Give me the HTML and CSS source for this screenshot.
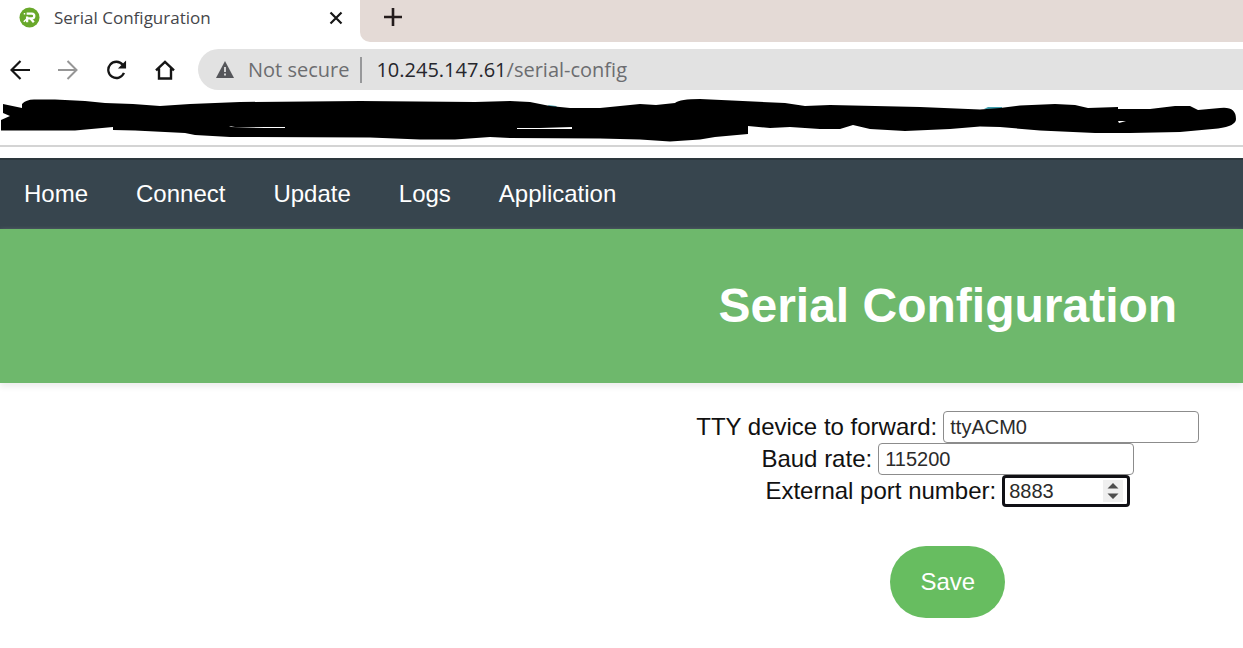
FILE: index.html
```html
<!DOCTYPE html>
<html lang="en">
<head>
<meta charset="utf-8">
<title>Serial Configuration</title>
<link rel="stylesheet" href="styles.css">
</head>
<body>
<header class="browser">
  <div class="tabs">
    <div class="tab">
      <svg class="favicon" viewBox="0 0 22 22" aria-hidden="true">
        <circle cx="11" cy="11" r="10.5" fill="#69a82b"/>
        <path d="M8 7h5.500a2.200 2.200 0 0 1 0 5H8.500M8.500 10v6M12 12l3.500 4" fill="none" stroke="#fff" stroke-width="2.400"/>
        <path d="M5 7h1.500M5 15.500l3-3" stroke="#fff" stroke-width="1.500"/>
      </svg>
      <span class="tab-title">Serial Configuration</span>
      <button class="icon-button tab-close" aria-label="Close tab">
        <svg width="14" height="14" viewBox="0 0 14 14"><path d="M1.500 1.500l11 11M12.500 1.500l-11 11" stroke="#161616" stroke-width="2.200"/></svg>
      </button>
    </div>
    <div class="strip">
      <button class="icon-button" aria-label="New tab">
        <svg width="18" height="18" viewBox="0 0 18 18"><path d="M9 0v18M0 9h18" stroke="#241c1c" stroke-width="2.600"/></svg>
      </button>
    </div>
  </div>
  <div class="toolbar">
    <div class="tools">
      <button class="icon-button" aria-label="Back">
        <svg width="20" height="20" viewBox="0 0 20 20" fill="none" stroke="#151515" stroke-width="2.200"><path d="M20 10H2M10.500 1L1.500 10l9 9"/></svg>
      </button>
      <button class="icon-button" aria-label="Forward">
        <svg width="20" height="20" viewBox="0 0 20 20" fill="none" stroke="#969696" stroke-width="2"><path d="M0 10h18M9.500 1l9 9-9 9"/></svg>
      </button>
      <button class="icon-button" aria-label="Reload">
        <svg width="21" height="20" viewBox="0 0 22 20"><path d="M17.500 4.500A8.500 8.500 0 1 0 18.800 13" fill="none" stroke="#151515" stroke-width="2.400"/><path d="M21 0v8.500h-8.500z" fill="#151515"/></svg>
      </button>
      <button class="icon-button" aria-label="Home">
        <svg width="20" height="20" viewBox="0 0 20 20"><path d="M1 10.300L10 1.800l9 8.500M4 8.500V18.500h12V8.500" fill="none" stroke="#151515" stroke-width="2.400"/></svg>
      </button>
    </div>
    <div class="address">
      <svg class="warning" width="18" height="17" viewBox="0 0 18 17"><path d="M9 0l9 17H0z" fill="#55565a"/><path d="M9 6v5M9 12.500v2" stroke="#e2e2e2" stroke-width="1.800"/></svg>
      <span class="insecure">Not secure</span>
      <span class="url"><span class="host">10.245.147.61</span>/serial-config</span>
    </div>
  </div>
  <svg class="marker" viewBox="0 0 1243 54" preserveAspectRatio="none" aria-hidden="true">
    <path d="M548 15l8 1 2 2h-8zM984 19l4-2h14v3z" fill="#3f9fae"/>
    <path d="M3 14L22 18V14Q26 9.500 34 9.500H55L85 11 105 13 133 14 160 16 190 14 240 12 360 11 475 12 510 11 530 12 550 16 570 18H600L620 16 640 14 656 15 675 13Q680 9 700 9L785 13 805 16 830 15 920 17 980 19.500 1000 18 1020 15.500 1055 14 1075 15 1088 18 1118 17V19H1150L1175 16 1190 16 1198 20 1220 18Q1236 16 1236 29 1236 36 1218 38.500L1180 42 1130 43 1095 43 1040 40.500 1000 37 980 36.500 950 39 905 41 870 39 853 35 840 39 820 39 790 37 770 38 748 36V44L715 47 700 49.500 670 51.500 640 49.500 600 48.500 510 48 490 47 455 49.500 420 49.500 370 47.500 230 47 195 45 185 43 135 40.500 113 40V37L75 40.500H1V30L10 26 3 23z"/>
    <path d="M229 36L235 37 285 37 285 38 265 38 231 37zM517 38H540L572 37V39L517 39zM1118 31L1126 31 1119 33z" fill="#fff"/>
  </svg>
</header>
<nav class="nav">
  <a href="#">Home</a>
  <a href="#">Connect</a>
  <a href="#">Update</a>
  <a href="#">Logs</a>
  <a href="#">Application</a>
</nav>
<main>
  <div class="banner"><h1>Serial Configuration</h1></div>
  <form class="form">
    <div class="row">
      <label for="tty">TTY device to forward:</label>
      <input class="field" id="tty" type="text" value="ttyACM0">
    </div>
    <div class="row">
      <label for="baud">Baud rate:</label>
      <input class="field" id="baud" type="text" value="115200">
    </div>
    <div class="row">
      <label for="port">External port number:</label>
      <span class="number">
        <input class="field port" id="port" type="number" value="8883">
        <svg class="spinner" viewBox="0 0 20 22" aria-hidden="true"><rect width="20" height="22" fill="#efefef"/><path d="M4.500 8.500L10 3l5.500 5.500zM4.500 13.500L10 19l5.500-5.500z" fill="#4d4d4d"/></svg>
      </span>
    </div>
    <button class="save" type="button">Save</button>
  </form>
</main>
</body>
</html>
```
FILE: styles.css
```css
* {
  box-sizing: border-box;
}

body {
  margin: 0;
  background: #fff;
  color: #111;
  font: 24px/32px "Liberation Sans", Arial, sans-serif;
}

.browser {
  padding-bottom: 11px;
  font-family: "Open Sans", "Noto Sans", sans-serif;
}

.tabs {
  display: flex;
  height: 42px;
  background: #fff;
}

.tab {
  display: flex;
  align-items: center;
  width: 360px;
  padding: 0 17px 7px 19px;
}

.favicon {
  width: 21px;
  height: 21px;
}

.tab-title {
  flex: 1;
  margin-left: 14px;
  color: #45464a;
  font-size: 17px;
  line-height: 24px;
}

.icon-button {
  display: flex;
  padding: 0;
  border: 0;
  background: none;
}

.strip {
  flex: 1;
  padding: 8px 24px;
  border-bottom-left-radius: 10px;
  background: #e4dad6;
}

.toolbar {
  display: flex;
  align-items: center;
  padding-top: 7px;
}

.tools {
  display: flex;
  gap: 28px;
  width: 198px;
  padding-left: 10px;
}

.address {
  display: flex;
  flex: 1;
  align-items: center;
  height: 41px;
  padding-left: 18px;
  border-radius: 21px 0 0 21px;
  background: #e2e2e2;
  color: #6c6d70;
  font-size: 20px;
  line-height: 26px;
}

.insecure {
  margin-left: 14px;
  padding-right: 11px;
  border-right: 2px solid #97989a;
}

.url {
  margin-left: 14px;
}

.host {
  color: #26262c;
}

.marker {
  display: block;
  width: 100%;
  height: 57px;
  padding-bottom: 1px;
  border-bottom: 2px solid #d4d4d4;
}

.nav {
  display: flex;
  gap: 48px;
  padding: 18px 24px 19px;
  border-top: 2px solid #2d383e;
  background: #37454e;
}

.nav a {
  color: #fff;
  text-decoration: none;
}

.banner {
  padding: 49px 0 49px 52.5%;
  background: #6eb86c;
  box-shadow: 0 4px 6px #eee;
  color: #fff;
  text-align: center;
}

h1 {
  margin: 0;
  font-size: 48px;
  line-height: 56px;
}

.form {
  display: flex;
  flex-direction: column;
  align-items: center;
  padding: 28px 0 30px 52.5%;
}

.row {
  display: flex;
  gap: 6px;
}

.field {
  width: 256px;
  height: 32px;
  padding: 0 6px;
  border: 1px solid #8c8c8c;
  border-radius: 4px;
  background: #fff;
  color: #2b2b2b;
  font: 20px "Liberation Sans", Arial, sans-serif;
}

.number {
  position: relative;
}

.port {
  display: block;
  width: 128px;
  padding: 0 4px;
  border: 3px solid #101015;
  appearance: textfield;
}

.port::-webkit-inner-spin-button {
  display: none;
}

.spinner {
  position: absolute;
  top: 5px;
  right: 7px;
  width: 20px;
  height: 22px;
}

.save {
  margin-top: 39px;
  padding: 20px 30px;
  border: 0;
  border-radius: 36px;
  background: #67bd60;
  color: #fff;
  font: 24px/32px "Liberation Sans", Arial, sans-serif;
}
```
